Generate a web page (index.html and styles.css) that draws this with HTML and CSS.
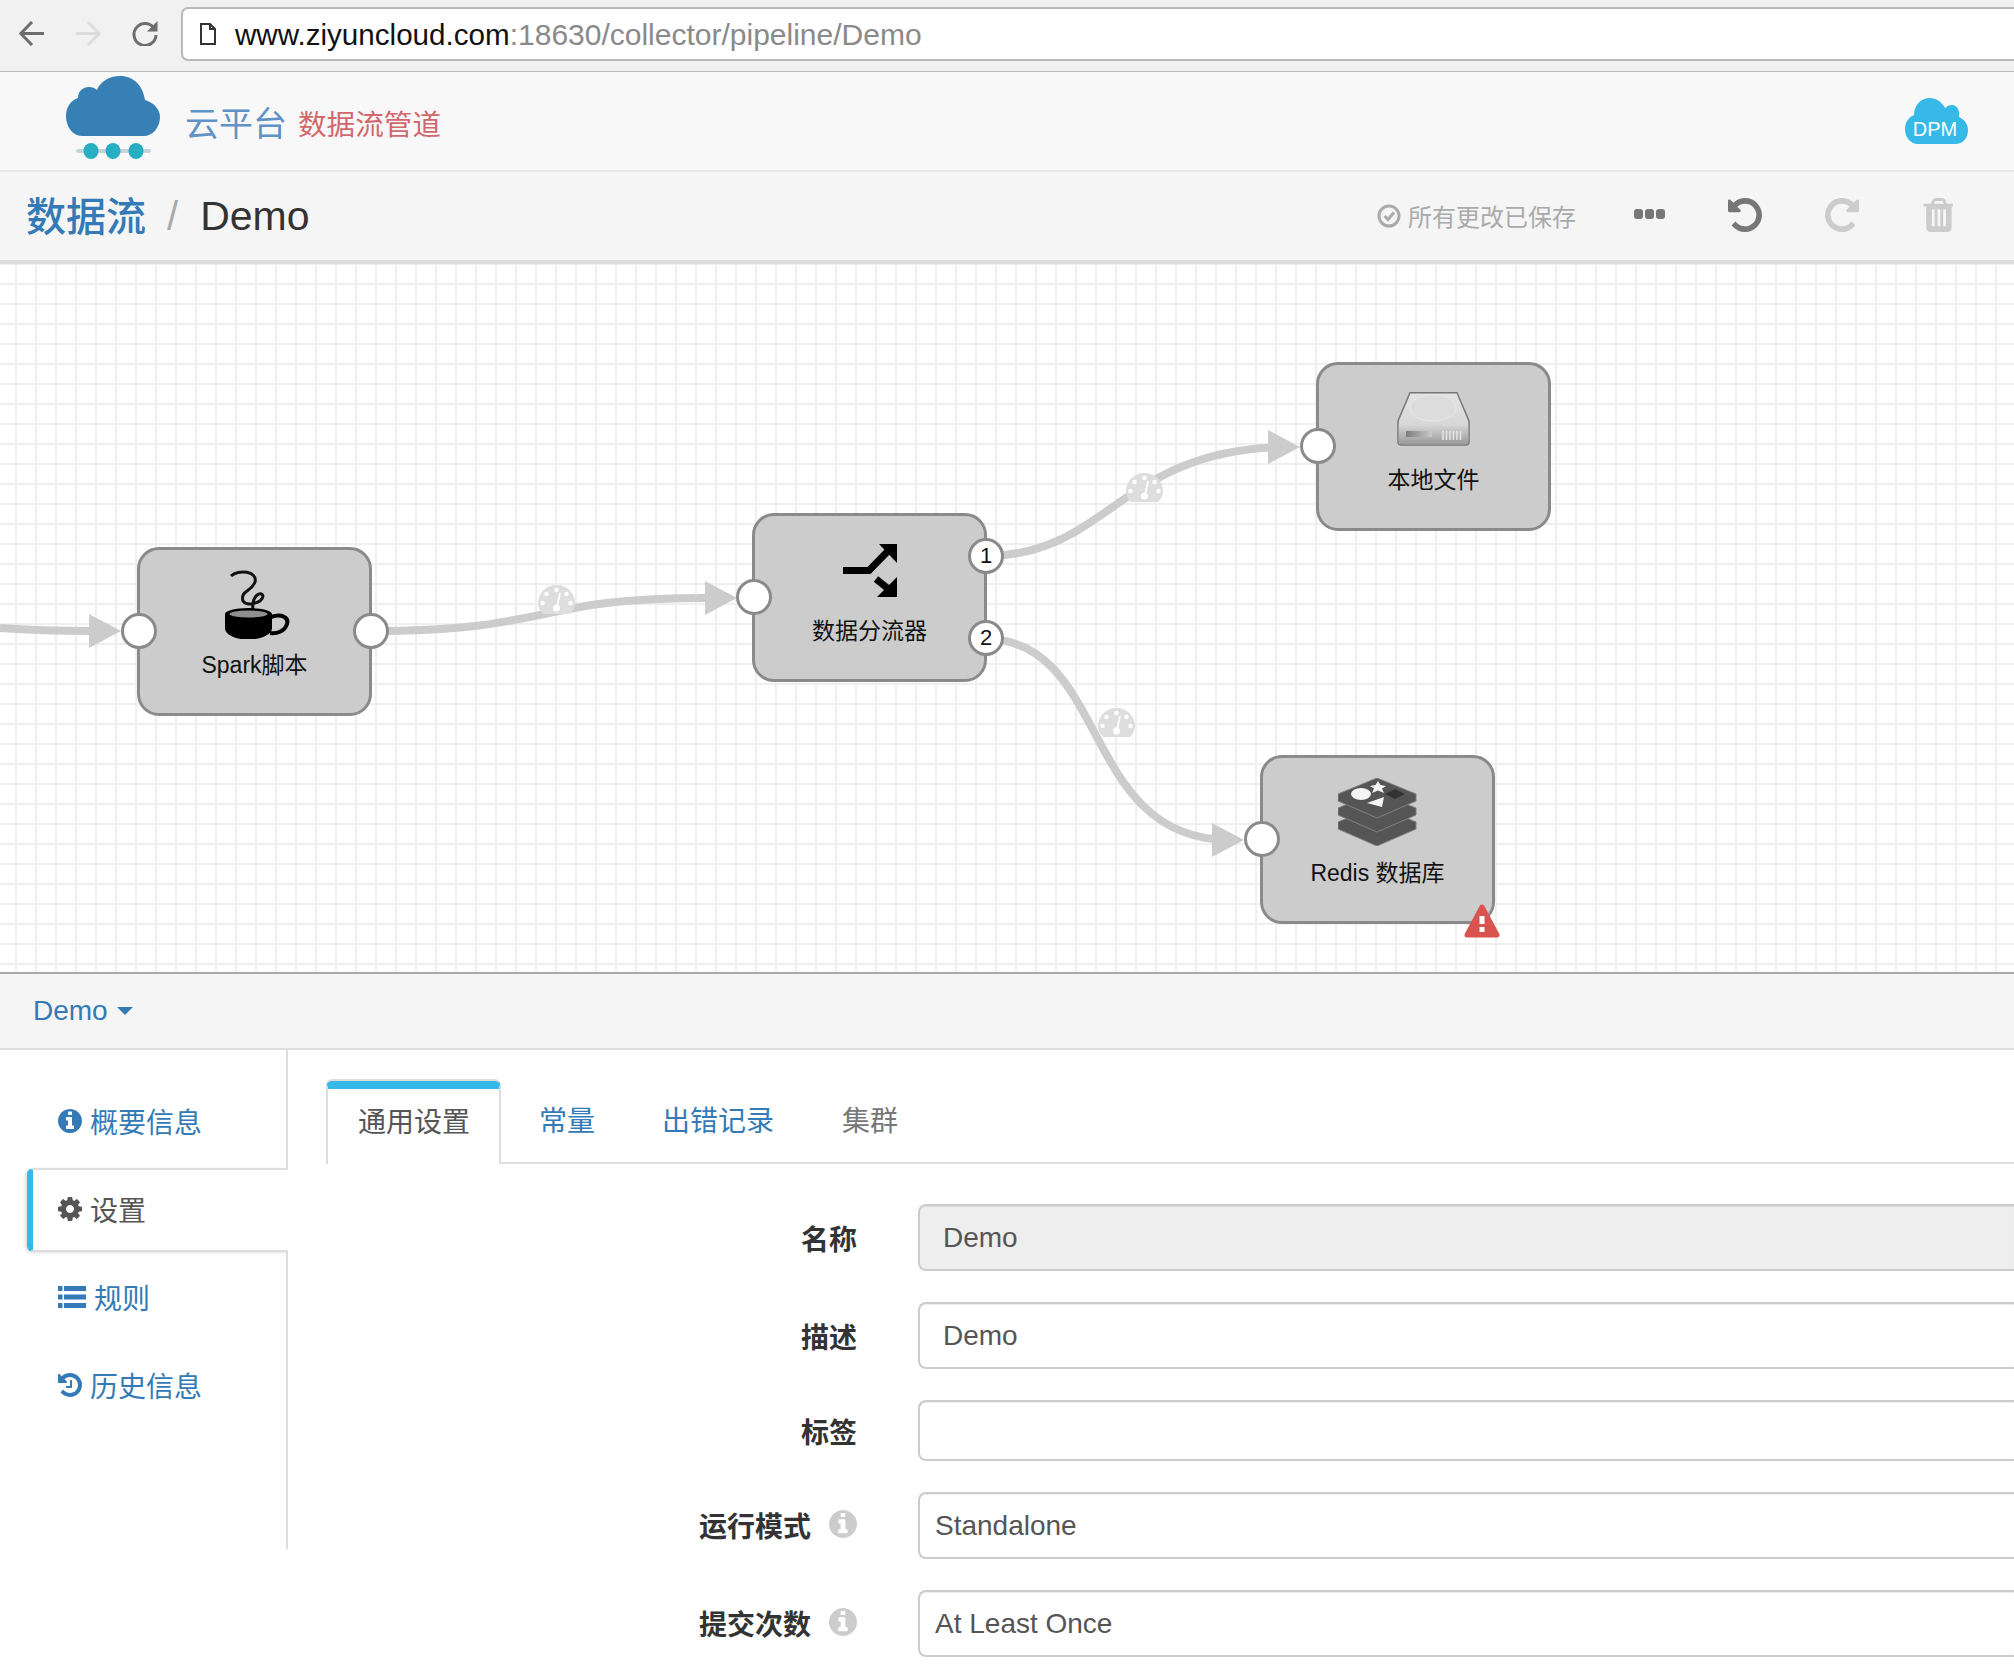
FILE: index.html
```html
<!DOCTYPE html>
<html lang="zh">
<head>
<meta charset="utf-8">
<title>Demo</title>
<link rel="stylesheet" href="styles.css">
</head>
<body>
<header class="browser">
  <svg class="nav-icon" viewBox="0 0 26 25"><path class="stroke-dark" d="M25 12.5H2M13 1 1.8 12.5 13 24"/></svg>
  <svg class="nav-icon" viewBox="0 0 26 25"><path class="stroke-faint" d="M1 12.5h23M13 1l11.2 11.5L13 24"/></svg>
  <svg class="nav-icon reload" viewBox="0 0 27 25"><path class="stroke-dark" d="M22.5 6.5A11 11 0 1 0 25 14"/><path class="fill-dark" d="M26.5 0v10.500h-10.500z"/></svg>
  <div class="url-box">
    <svg class="doc-icon" viewBox="0 0 16 22"><path d="M1 1h9l5 5v15H1zM10 1v5h5"/></svg>
    <span class="url"><span class="url-host">www.ziyuncloud.com</span>:18630/collector/pipeline/Demo</span>
  </div>
</header>

<div class="logo-bar">
  <svg class="logo" viewBox="0 0 95 85">
    <path class="logo-cloud" d="M16 60C6 60 0 50 0 40 0 31 5 24 12 22 12 15 17 11 23 11 26 11 29 12 31 14 34 6 43 0 54 0 68 0 77 10 79 24 88 27 94 33 94 41 94 52 86 60 78 60Z"/>
    <rect class="logo-line" x="10" y="73" width="75" height="4" rx="2"/>
    <ellipse class="logo-dot" cx="25" cy="75" rx="7.500" ry="8"/>
    <ellipse class="logo-dot" cx="47" cy="75" rx="7.500" ry="8"/>
    <ellipse class="logo-dot" cx="70" cy="75" rx="7.500" ry="8"/>
  </svg>
  <span class="brand">云平台</span>
  <span class="brand-sub">数据流管道</span>
  <svg class="dpm" viewBox="0 0 63 46">
    <path class="dpm-cloud" d="M13 46C5 46 0 39 0 31 0 24 4 19 9 17 9 7 16 0 25 0 31 0 37 4 40 10 42 8 44 7 47 7 52 7 55 12 54 19 60 22 63 27 63 32 63 40 58 46 50 46Z"/>
    <text class="dpm-text" x="30" y="38">DPM</text>
  </svg>
</div>

<div class="crumbs">
  <a class="crumb-link">数据流</a>
  <span class="crumb-sep">/</span>
  <span class="crumb-current">Demo</span>
  <div class="tools">
    <svg class="saved-icon" viewBox="0 0 24 24"><circle cx="12" cy="12" r="10"/><path d="M7.500 12l3.500 3.500 6-7"/></svg>
    <span class="saved">所有更改已保存</span>
    <svg class="dots" viewBox="0 0 31 10"><rect x="0" y="0" width="9" height="10" rx="3"/><rect x="11" y="0" width="9" height="10" rx="3"/><rect x="22" y="0" width="9" height="10" rx="3"/></svg>
    <svg class="tool tool-undo" viewBox="128 128 1536 1536"><path d="M1664 896q0 156-61 298t-164 245-245 164-298 61q-172 0-327-72.500t-264-204.500q-7-10-6.500-22.500t8.500-20.500l137-138q10-9 25-9 16 2 23 12 73 95 179 147t225 52q104 0 198.500-40.500t163.500-109.500 109.500-163.500 40.500-198.500-40.500-198.500-109.500-163.500-163.500-109.500-198.500-40.500q-98 0-188 35.500t-160 101.500l137 138q31 30 14 69-17 40-59 40h-448q-26 0-45-19t-19-45v-448q0-42 40-59 39-17 69 14l130 129q107-101 244.500-156.500t284.500-55.500q156 0 298 61t245 164 164 245 61 298z"/></svg>
    <svg class="tool tool-redo" viewBox="128 128 1536 1536"><path d="M1664 896q0 156-61 298t-164 245-245 164-298 61q-172 0-327-72.500t-264-204.500q-7-10-6.500-22.500t8.500-20.500l137-138q10-9 25-9 16 2 23 12 73 95 179 147t225 52q104 0 198.500-40.500t163.500-109.500 109.500-163.500 40.500-198.500-40.500-198.500-109.500-163.500-163.500-109.500-198.500-40.500q-98 0-188 35.500t-160 101.500l137 138q31 30 14 69-17 40-59 40h-448q-26 0-45-19t-19-45v-448q0-42 40-59 39-17 69 14l130 129q107-101 244.500-156.500t284.500-55.500q156 0 298 61t245 164 164 245 61 298z"/></svg>
    <svg class="tool tool-trash" viewBox="128 128 1408 1536"><path d="M704 1376v-704q0-14-9-23t-23-9h-64q-14 0-23 9t-9 23v704q0 14 9 23t23 9h64q14 0 23-9t9-23zm256 0v-704q0-14-9-23t-23-9h-64q-14 0-23 9t-9 23v704q0 14 9 23t23 9h64q14 0 23-9t9-23zm256 0v-704q0-14-9-23t-23-9h-64q-14 0-23 9t-9 23v704q0 14 9 23t23 9h64q14 0 23-9t9-23zm-544-992h448l-48-117q-7-9-17-11h-317q-10 2-17 11zm928 32v64q0 14-9 23t-23 9h-96v948q0 83-47 143.500t-113 60.500h-832q-66 0-113-58.500t-47-141.500v-952h-96q-14 0-23-9t-9-23v-64q0-14 9-23t23-9h309l70-167q15-37 54-63t79-26h320q40 0 79 26t54 63l70 167h309q14 0 23 9t9 23z"/></svg>
  </div>
</div>

<section class="canvas">
  <svg class="edges" viewBox="0 264 2014 708">
    <defs>
      <g id="gauge">
        <path class="gauge-body" d="M5 29C1 25 0 21 0 18 0 8 8 0 18.500 0 29 0 37 8 37 18 37 21 36 25 32 29Z"/>
        <circle class="gauge-dot" cx="18.500" cy="5" r="2.200"/>
        <circle class="gauge-dot" cx="8.500" cy="9" r="2.200"/>
        <circle class="gauge-dot" cx="28.500" cy="9" r="2.200"/>
        <circle class="gauge-dot" cx="4.500" cy="18" r="2.200"/>
        <circle class="gauge-dot" cx="32.500" cy="18" r="2.200"/>
        <path class="gauge-needle" d="M22 8 19.500 20"/>
        <circle class="gauge-dot" cx="18.500" cy="23" r="3.500"/>
      </g>
    </defs>
    <path class="edge" d="M0 628C40 631 60 631 92 631"/>
    <polygon class="arrow" points="89,614 121,631 89,648"/>
    <path class="edge" d="M371 631C555 631 530 598 708 598"/>
    <polygon class="arrow" points="705,581 737,598 705,615"/>
    <path class="edge" d="M985 556C1110 556 1120 447 1290 447"/>
    <polygon class="arrow" points="1268,430 1300,447 1268,464"/>
    <path class="edge" d="M985 639C1110 639 1080 840 1230 840"/>
    <polygon class="arrow" points="1212,823 1244,840 1212,857"/>
    <use href="#gauge" x="538" y="585"/>
    <use href="#gauge" x="1126" y="473"/>
    <use href="#gauge" x="1098" y="708"/>
  </svg>

  <div class="node node-spark">
    <div class="node-icon">
      <svg class="icon-spark" viewBox="225 569 65 69">
        <path class="steam" d="M231 575C238 568 258 570 255 581 251 591 240 590 243 600 247 606 262 602 263 595 262 590 251 593 253 610"/>
        <path class="cup" d="M225 613V628C228 642 268 642 272 628V613Z"/>
        <ellipse class="cup" cx="248.500" cy="613" rx="23.500" ry="6"/>
        <ellipse class="cup-top" cx="248.500" cy="613" rx="19" ry="3.500"/>
        <path class="cup-handle" d="M271 616C282 612 289 617 287 623 285 630 277 633 270 632"/>
      </svg>
    </div>
    <div class="node-label">Spark脚本</div>
    <span class="port port-left"></span>
    <span class="port port-right"></span>
  </div>

  <div class="node node-split">
    <div class="node-icon">
      <svg class="icon-split" viewBox="843 545 54 53">
        <path class="split-line" d="M843 571.500H869L889 551"/>
        <polygon class="split-head" points="879,545 897,545 897,564"/>
        <path class="split-line" d="M876 580 891 592"/>
        <polygon class="split-head" points="877,598 897,598 897,578"/>
      </svg>
    </div>
    <div class="node-label">数据分流器</div>
    <span class="port port-left"></span>
    <span class="port port-out port-out-1">1</span>
    <span class="port port-out port-out-2">2</span>
  </div>

  <div class="node node-file">
    <div class="node-icon">
      <svg class="icon-disk" viewBox="1397 393 73 54">
        <defs>
          <linearGradient id="diskTop" x1="0" y1="0" x2="0" y2="1"><stop offset="0" stop-color="#e4e4e4"/><stop offset="1" stop-color="#cfcfcf"/></linearGradient>
          <linearGradient id="diskBody" x1="0" y1="0" x2="0" y2="1"><stop offset="0" stop-color="#d6d6d6"/><stop offset="1" stop-color="#9a9a9a"/></linearGradient>
          <linearGradient id="diskBar" x1="0" y1="0" x2="1" y2="0"><stop offset="0" stop-color="#7d7d7d"/><stop offset="1" stop-color="#c9c9c9"/></linearGradient>
        </defs>
        <path class="disk-shell" d="M1410 393.800H1457L1469 422V443Q1469 446 1465 446H1402Q1398 446 1398 443V422Z" fill="url(#diskTop)"/>
        <ellipse class="disk-plate" cx="1433" cy="409" rx="23" ry="13"/>
        <path class="disk-front" d="M1398.800 426H1468.200V442Q1468.200 445.200 1465 445.200H1402Q1398.800 445.200 1398.800 442Z" fill="url(#diskBody)"/>
        <rect x="1406" y="432" width="26" height="6" fill="url(#diskBar)"/>
        <path class="disk-slots" d="M1443 432v9M1446.500 432v9M1450 432v9M1453.500 432v9M1457 432v9M1460.500 432v9"/>
      </svg>
    </div>
    <div class="node-label">本地文件</div>
    <span class="port port-left"></span>
  </div>

  <div class="node node-redis">
    <div class="node-icon">
      <svg class="icon-redis" viewBox="1338 778 79 68">
        <path class="redis-layer" d="M1338 822 1377 806 1416 822V829L1377 846 1338 829Z"/>
        <path class="redis-layer" d="M1338 808 1377 792 1416 808V815L1377 832 1338 815Z"/>
        <path class="redis-layer" d="M1338 794 1377 778 1416 794V801L1377 818 1338 801Z"/>
        <ellipse class="redis-mark" cx="1361" cy="794" rx="10" ry="6"/>
        <polygon class="redis-mark" points="1378,781 1380.500,785 1386,786 1382,788.500 1384,793 1378,790.500 1372,793 1374,788.500 1370,786 1375.500,785"/>
        <polygon class="redis-mark" points="1367,803 1384,797 1382,807"/>
        <polygon class="redis-dark" points="1385,794 1395,789 1405,794 1395,799"/>
      </svg>
    </div>
    <div class="node-label">Redis 数据库</div>
    <span class="port port-left"></span>
    <svg class="warning" viewBox="0 0 36 34">
      <path class="warning-tri" d="M18 3 33 31H3Z"/>
      <rect class="warning-mark" x="15.500" y="12" width="5" height="8"/>
      <rect class="warning-mark" x="15.500" y="23" width="5" height="5"/>
    </svg>
  </div>
</section>

<div class="config-head">
  <span class="config-title">Demo</span>
  <span class="caret"></span>
</div>

<main class="config">
  <nav class="side">
    <a class="side-item">
      <svg class="side-icon" viewBox="128 128 1536 1536"><path d="M1152 1376v-160q0-14-9-23t-23-9h-96v-512q0-14-9-23t-23-9h-320q-14 0-23 9t-9 23v160q0 14 9 23t23 9h96v320h-96q-14 0-23 9t-9 23v160q0 14 9 23t23 9h448q14 0 23-9t9-23zm-128-896v-160q0-14-9-23t-23-9h-192q-14 0-23 9t-9 23v160q0 14 9 23t23 9h192q14 0 23-9t9-23zm640 416q0 209-103 385.500t-279.500 279.500-385.500 103-385.500-103-279.500-279.500-103-385.500 103-385.500 279.500-279.500 385.500-103 385.500 103 279.500 279.500 103 385.500z"/></svg>
      概要信息
    </a>
    <a class="side-item side-active">
      <svg class="side-icon" viewBox="128 128 1536 1536"><path d="M1152 896q0-106-75-181t-181-75-181 75-75 181 75 181 181 75 181-75 75-181zm512-109v222q0 12-8 23t-20 13l-185 28q-19 54-39 91 35 50 107 138 10 12 10 25t-9 23q-27 37-99 108t-94 71q-12 0-26-9l-138-108q-44 23-91 38-16 136-29 186-7 28-36 28h-222q-14 0-24.500-8.500t-11.500-21.500l-28-184q-49-16-90-37l-141 107q-10 9-25 9-14 0-25-11-126-114-165-168-7-10-7-23 0-12 8-23 15-21 51-66.500t54-70.500q-27-50-41-99l-183-27q-13-2-21-12.500t-8-23.500v-222q0-12 8-23t19-13l186-28q14-46 39-92-40-57-107-138-10-12-10-24 0-10 9-23 26-36 98.500-107.500t94.500-71.500q13 0 26 10l138 107q44-23 91-38 16-136 29-186 7-28 36-28h222q14 0 24.500 8.500t11.500 21.500l28 184q49 16 90 37l142-107q9-9 24-9 13 0 25 10 129 119 165 170 7 8 7 22 0 12-8 23-15 21-51 66.500t-54 70.500q26 50 41 98l183 28q13 2 21 12.500t8 23.500z"/></svg>
      设置
    </a>
    <a class="side-item">
      <svg class="side-icon side-icon-wide" viewBox="0 0 28 22"><rect x="0" y="0" width="4.500" height="5"/><rect x="6" y="0" width="22" height="5"/><rect x="0" y="8.500" width="4.500" height="5"/><rect x="6" y="8.500" width="22" height="5"/><rect x="0" y="17" width="4.500" height="5"/><rect x="6" y="17" width="22" height="5"/></svg>
      规则
    </a>
    <a class="side-item">
      <svg class="side-icon" viewBox="128 128 1536 1536"><path d="M1664 896q0 156-61 298t-164 245-245 164-298 61q-172 0-327-72.500t-264-204.500q-7-10-6.500-22.500t8.500-20.500l137-138q10-9 25-9 16 2 23 12 73 95 179 147t225 52q104 0 198.500-40.500t163.500-109.500 109.500-163.500 40.500-198.500-40.500-198.500-109.500-163.500-163.500-109.500-198.500-40.500q-98 0-188 35.500t-160 101.500l137 138q31 30 14 69-17 40-59 40h-448q-26 0-45-19t-19-45v-448q0-42 40-59 39-17 69 14l130 129q107-101 244.500-156.500t284.500-55.500q156 0 298 61t245 164 164 245 61 298z"/><path d="M1024 608v448q0 14-9 23t-23 9H672q-14 0-23-9t-9-23v-64q0-14 9-23t23-9h224V608q0-14 9-23t23-9h64q14 0 23 9t9 23z"/></svg>
      历史信息
    </a>
  </nav>

  <div class="panel">
    <div class="tabs">
      <a class="tab-active">通用设置</a>
      <div class="tab-rest">
        <a class="tab tab-first">常量</a>
        <a class="tab">出错记录</a>
        <a class="tab tab-muted">集群</a>
      </div>
    </div>
    <form class="form">
      <div class="row">
        <div class="form-label">名称</div>
        <div class="field field-disabled field-text">Demo</div>
      </div>
      <div class="row">
        <div class="form-label">描述</div>
        <div class="field field-text">Demo</div>
      </div>
      <div class="row">
        <div class="form-label">标签</div>
        <div class="field field-short"></div>
      </div>
      <div class="row">
        <div class="form-label form-label-help">运行模式
          <svg class="help" viewBox="128 128 1536 1536"><path d="M1152 1376v-160q0-14-9-23t-23-9h-96v-512q0-14-9-23t-23-9h-320q-14 0-23 9t-9 23v160q0 14 9 23t23 9h96v320h-96q-14 0-23 9t-9 23v160q0 14 9 23t23 9h448q14 0 23-9t9-23zm-128-896v-160q0-14-9-23t-23-9h-192q-14 0-23 9t-9 23v160q0 14 9 23t23 9h192q14 0 23-9t9-23zm640 416q0 209-103 385.500t-279.500 279.500-385.500 103-385.500-103-279.500-279.500-103-385.500 103-385.500 279.500-279.500 385.500-103 385.500 103 279.500 279.500 103 385.500z"/></svg>
        </div>
        <div class="field">Standalone</div>
      </div>
      <div class="row">
        <div class="form-label form-label-help">提交次数
          <svg class="help" viewBox="128 128 1536 1536"><path d="M1152 1376v-160q0-14-9-23t-23-9h-96v-512q0-14-9-23t-23-9h-320q-14 0-23 9t-9 23v160q0 14 9 23t23 9h96v320h-96q-14 0-23 9t-9 23v160q0 14 9 23t23 9h448q14 0 23-9t9-23zm-128-896v-160q0-14-9-23t-23-9h-192q-14 0-23 9t-9 23v160q0 14 9 23t23 9h192q14 0 23-9t9-23zm640 416q0 209-103 385.500t-279.500 279.500-385.500 103-385.500-103-279.500-279.500-103-385.500 103-385.500 279.500-279.500 385.500-103 385.500 103 279.500 279.500 103 385.500z"/></svg>
        </div>
        <div class="field">At Least Once</div>
      </div>
    </form>
  </div>
</main>
</body>
</html>
```

FILE: styles.css
```css
* { box-sizing: border-box; }
html, body { margin: 0; padding: 0; width: 2014px; height: 1666px; overflow: hidden; background: #fff; }
body { font-family: "Liberation Sans", "Noto Sans CJK SC", sans-serif; font-size: 28px; color: #333; }

/* browser chrome */
.browser { height: 72px; background: #f1f1f1; border-bottom: 1px solid #b8b8b8; display: flex; align-items: flex-start; padding-left: 19px; }
.nav-icon { width: 26px; height: 25px; margin-top: 21px; margin-right: 30px; flex: none; }
.reload { width: 27px; margin-right: 23px; }
.stroke-dark, .stroke-faint { fill: none; stroke-width: 3; }
.stroke-dark { stroke: #6d6d6d; }
.stroke-faint { stroke: #dcdcdc; }
.fill-dark { fill: #6d6d6d; }
.url-box { margin-top: 7px; flex: 1; min-width: 0; height: 54px; background: #fff; border: 2px solid #b9b9b9; border-right: 0; border-radius: 7px 0 0 7px; display: flex; align-items: center; padding-left: 17px; }
.doc-icon { width: 16px; height: 22px; flex: none; fill: #fff; stroke: #333; stroke-width: 2; }
.url { margin-left: 19px; padding-top: 2px; font-size: 30px; color: #8a8a8a; white-space: nowrap; }
.url-host { font-size: 29.600px; color: #111; }

/* logo bar */
.logo-bar { height: 100px; background: #f8f8f8; border-bottom: 2px solid #e7e7e7; display: flex; align-items: flex-start; padding-left: 66px; }
.logo { width: 95px; height: 85px; margin-top: 4px; flex: none; }
.logo-cloud { fill: #3680b6; }
.logo-line { fill: #c3d2d8; }
.logo-dot { fill: #26afc3; }
.brand { margin-left: 24px; margin-top: 29px; font-size: 34px; line-height: 46px; color: #5f93c6; }
.brand-sub { margin-left: 11px; margin-top: 32px; font-size: 28.600px; line-height: 42px; color: #d0686c; }
.dpm { width: 63px; height: 46px; margin-top: 26px; margin-left: auto; margin-right: 46px; flex: none; }
.dpm-cloud { fill: #37b9e8; }
.dpm-text { fill: #fff; font-size: 20px; text-anchor: middle; font-family: "Liberation Sans", sans-serif; }

/* breadcrumb */
.crumbs { height: 92px; background: #f5f5f5; border-bottom: 4px solid #ddd; display: flex; align-items: center; padding-left: 26px; font-size: 40px; }
.crumb-link { color: #337ab7; font-weight: 500; margin-bottom: 4px; }
.crumb-sep { margin-left: 21px; color: #aaa; }
.crumb-current { margin-left: 22px; font-size: 41px; color: #333; }
.tools { margin-left: auto; display: flex; align-items: center; padding-right: 61px; }
.saved-icon { width: 24px; height: 24px; fill: none; stroke: #aaa; stroke-width: 3; flex: none; }
.saved { margin-left: 7px; margin-bottom: 2px; font-size: 24px; color: #aaa; }
.dots { width: 31px; height: 10px; margin-left: 58px; margin-top: -4px; fill: #777; flex: none; }
.tool { width: 34px; height: 34px; flex: none; margin-top: -2px; }
.tool-undo { margin-left: 63px; fill: #777; }
.tool-redo { margin-left: 63px; fill: #ccc; transform: scaleX(-1); }
.tool-trash { width: 31px; margin-left: 63px; fill: #ccc; }

/* pipeline canvas */
.canvas { position: relative; height: 710px; overflow: hidden; border-bottom: 2px solid #aaa; background-color: #fff;
  background-image: linear-gradient(to right, #efefef 2px, transparent 2px), linear-gradient(to bottom, #efefef 2px, transparent 2px);
  background-size: 20px 20px; background-position: 15px -1px; }
.edges { position: absolute; left: 0; top: 0; width: 2014px; height: 708px; }
.edge { fill: none; stroke: #ccc; stroke-width: 8; }
.arrow { fill: #ccc; }
.gauge-body { fill: #dedede; }
.gauge-dot { fill: #fff; }
.gauge-needle { fill: none; stroke: #fff; stroke-width: 1.800; }

.node { position: absolute; width: 235px; height: 169px; background: #ccc; border: 3px solid #8a8a8a; border-radius: 22px; display: flex; flex-direction: column; align-items: center; padding-top: 19px; }
.node-spark { left: 137px; top: 283px; }
.node-split { left: 752px; top: 249px; }
.node-file { left: 1316px; top: 98px; }
.node-redis { left: 1260px; top: 491px; }
.node-icon { height: 70px; display: flex; align-items: center; justify-content: center; flex: none; }
.node-label { margin-top: 11px; font-size: 23px; line-height: 30px; color: #111; white-space: nowrap; }

.port { position: absolute; width: 36px; height: 36px; border-radius: 50%; background: #fff; border: 3px solid #8a8a8a; display: flex; align-items: center; justify-content: center; font-size: 22px; color: #111; }
.port-left { left: -19px; top: 63px; }
.port-right { right: -20px; top: 63px; }
.port-out { right: -20px; }
.port-out-1 { top: 22px; }
.port-out-2 { top: 104px; }

.icon-spark { width: 65px; height: 69px; margin-left: 5px; }
.steam { fill: none; stroke: #111; stroke-width: 3; }
.cup { fill: #000; }
.cup-top { fill: #8f8f8f; }
.cup-handle { fill: none; stroke: #000; stroke-width: 4; }
.icon-split { width: 54px; height: 53px; }
.split-line { fill: none; stroke: #000; stroke-width: 7; }
.split-head { fill: #000; }
.icon-disk { width: 73px; height: 54px; }
.disk-shell { stroke: #777; stroke-width: 1.500; }
.disk-plate { fill: #dcdcdc; stroke: #e8e8e8; }
.disk-slots { fill: none; stroke: #e6e6e6; stroke-width: 1.500; }
.icon-redis { width: 79px; height: 68px; }
.redis-layer { fill: #555; stroke: #808080; stroke-width: 1; }
.redis-mark { fill: #f4f4f4; }
.redis-dark { fill: #333; }
.warning { position: absolute; right: -8px; bottom: -17px; width: 36px; height: 34px; }
.warning-tri { fill: #d9534f; stroke: #d9534f; stroke-width: 5; stroke-linejoin: round; }
.warning-mark { fill: #fff; }

/* config head */
.config-head { height: 76px; background: #f5f5f5; border-bottom: 2px solid #ddd; display: flex; align-items: center; padding-left: 33px; color: #337ab7; }
.caret { width: 0; height: 0; margin-left: 9px; border-left: 8px solid transparent; border-right: 8px solid transparent; border-top: 8px solid #337ab7; }

/* config body */
.config { display: flex; align-items: flex-start; }
.side { width: 288px; height: 499px; flex: none; border-right: 2px solid #ddd; padding-top: 28px; padding-left: 27px; }
.side-item { display: flex; align-items: center; height: 88px; padding-left: 31px; padding-bottom: 2px; color: #337ab7; }
.side-icon { width: 24px; height: 24px; margin-right: 8px; fill: currentColor; flex: none; }
.side-icon-wide { width: 28px; height: 22px; margin-right: 8px; }
.side-active { height: 84px; margin: 2px -2px 2px 0; padding-left: 25px; background: #fff; color: #555; border: 2px solid #ddd; border-right: 0; border-left: 6px solid #37b9e8; border-radius: 6px 0 0 6px; box-shadow: -2px 1px 3px rgba(0,0,0,.12); }
.panel { flex: 1; min-width: 0; }
.tabs { height: 114px; padding-top: 31px; padding-left: 38px; display: flex; align-items: stretch; }
.tab-active { flex: none; width: 175px; padding-left: 30px; background: #fff; color: #555; border: 2px solid #ddd; border-top: 8px solid #37b9e8; border-bottom: 0; border-radius: 6px 6px 0 0; line-height: 68px; white-space: nowrap; box-shadow: 0 -2px 0 #ddd; }
.tab-rest { flex: 1; display: flex; align-items: flex-start; border-bottom: 2px solid #ddd; }
.tab { padding: 0 34px; line-height: 82px; color: #337ab7; white-space: nowrap; }
.tab-first { margin-left: 4px; padding-right: 33px; }
.tab-muted { color: #777; }

.form { padding-top: 40px; display: flex; flex-direction: column; gap: 31px; }
.row { display: flex; align-items: center; }
.form-label { width: 569px; flex: none; margin-right: 61px; display: flex; align-items: center; justify-content: flex-end; gap: 18px; font-weight: 700; color: #333; }
.form-label-help { padding-bottom: 2px; }
.help { width: 28px; height: 28px; fill: #ccc; flex: none; margin-top: -2px; }
.field { flex: 1; min-width: 0; height: 67px; border: 2px solid #ccc; border-right: 0; border-radius: 8px 0 0 8px; color: #555; display: flex; align-items: center; padding-left: 15px; background: #fff; box-shadow: inset 0 1px 1px rgba(0,0,0,.075); }
.field-text { padding-left: 23px; }
.field-short { height: 61px; }
.field-disabled { background: #eee; }
```
